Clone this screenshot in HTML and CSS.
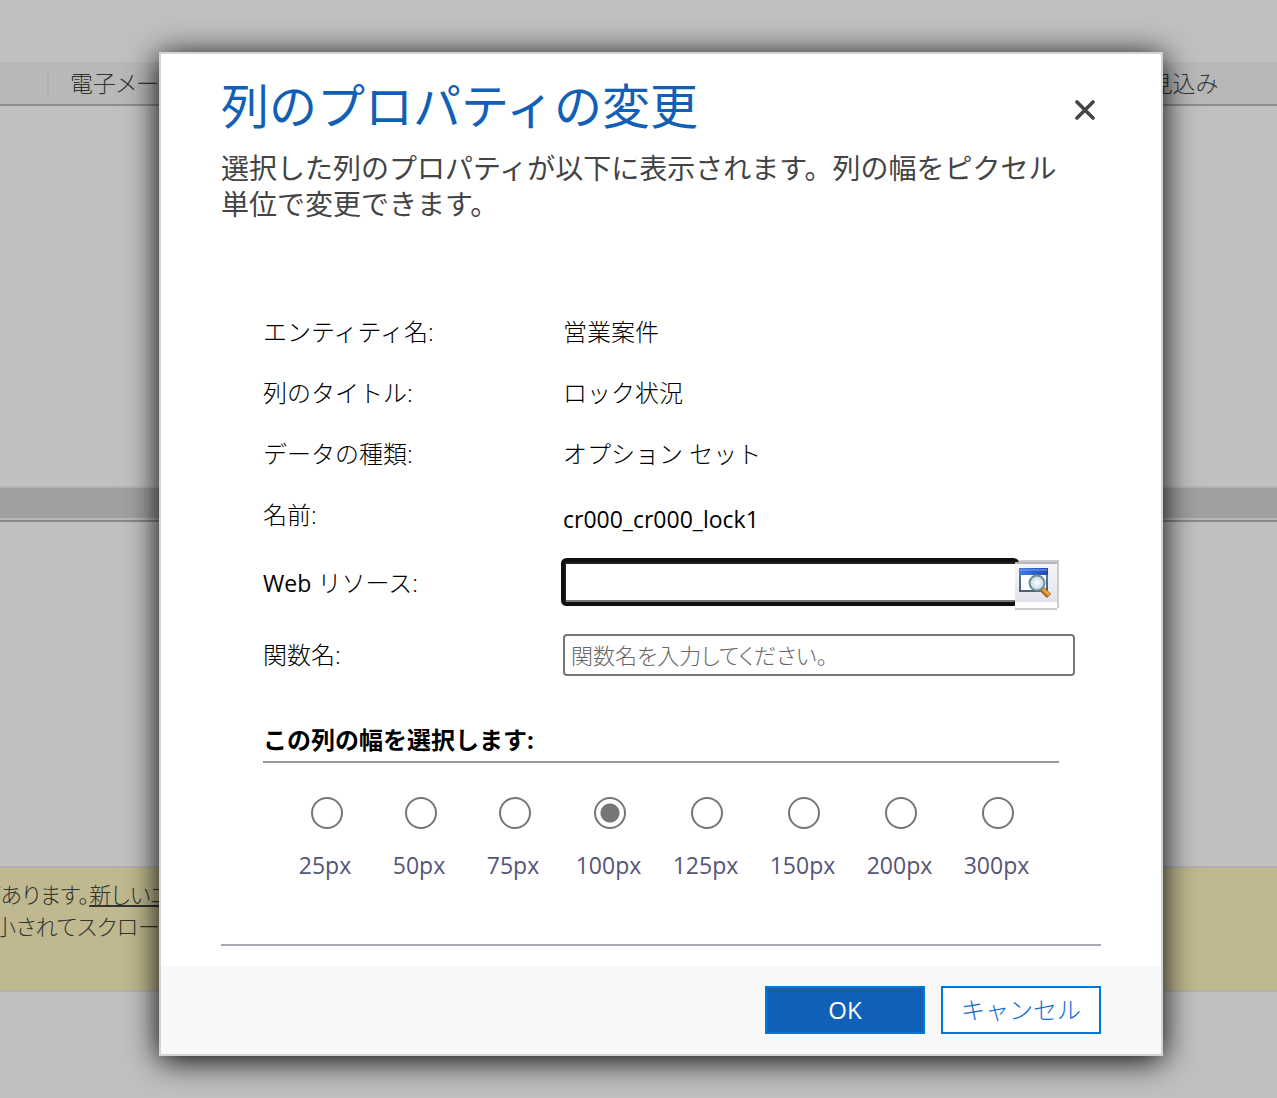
FILE: index.html
```html
<!DOCTYPE html>
<html lang="ja">
<head>
<meta charset="utf-8">
<meta name="viewport" content="width=device-width, initial-scale=1">
<title>列のプロパティの変更</title>
<link rel="stylesheet" href="styles.css">
</head>
<body>
<div class="stage">
  <div class="backdrop">
    <div class="view-header">
      <span class="view-column">電子メール</span>
      <span>見込み</span>
    </div>
    <div class="view-body"></div>
    <div class="view-bar"></div>
    <div class="view-body view-body-lower"></div>
    <div class="notice">
      <p>があります。<a href="#">新しいエ</a></p>
      <p>小されてスクロール</p>
    </div>
  </div>

  <div class="overlay">
    <form class="dialog" role="dialog" aria-labelledby="dialog-title">
      <header class="dialog-header">
        <div class="title-row">
          <h1 id="dialog-title">列のプロパティの変更</h1>
          <button type="button" class="close" aria-label="閉じる">
            <svg width="20" height="20" viewBox="0 0 20 20"><path d="M2 2L18 18M18 2L2 18" stroke="#444" stroke-width="3.6" stroke-linecap="round"/></svg>
          </button>
        </div>
        <p class="description">選択した列のプロパティが以下に表示されます。列の幅をピクセル単位で変更できます。</p>
      </header>

      <div class="dialog-body">
        <dl class="facts">
          <dt>エンティティ名:</dt><dd>営業案件</dd>
          <dt>列のタイトル:</dt><dd>ロック状況</dd>
          <dt>データの種類:</dt><dd>オプション セット</dd>
          <dt>名前:</dt><dd class="latin">cr000_cr000_lock1</dd>
        </dl>
        <div class="field">
          <label for="resource"><span class="latin-word">Web</span> リソース:</label>
          <div class="lookup">
            <input id="resource" type="text">
            <button type="button" aria-label="検索">
              <svg width="36" height="36" viewBox="0 0 36 36">
                <defs>
                  <linearGradient id="bar" x1="0" y1="0" x2="1" y2="0"><stop offset="0" stop-color="#3f7be8"/><stop offset="1" stop-color="#2148b4"/></linearGradient>
                  <linearGradient id="frame" x1="0" y1="0" x2="0" y2="1"><stop offset="0" stop-color="#4c7fd0"/><stop offset="1" stop-color="#4b5f80"/></linearGradient>
                  <radialGradient id="lens"><stop offset="0" stop-color="#fff"/><stop offset="1" stop-color="#b9d3ee"/></radialGradient>
                </defs>
                <rect x="3" y="5" width="27" height="22" fill="#fff" stroke="url(#frame)" stroke-width="2"/>
                <rect x="2" y="4" width="29" height="7" fill="url(#bar)"/>
                <path d="M3 6H30" stroke="#7fa5f4" stroke-width="1"/>
                <path d="M25 25L32 32" stroke="#a5661d" stroke-width="6"/>
                <path d="M26 25L32 31" stroke="#efa13a" stroke-width="3"/>
                <circle cx="20" cy="19" r="7.5" fill="url(#lens)" stroke="#71907f" stroke-width="2"/>
              </svg>
            </button>
          </div>
        </div>
        <div class="field">
          <label for="function">関数名:</label>
          <input id="function" class="text-box" type="text" placeholder="関数名を入力してください。">
        </div>

        <fieldset class="widths">
          <legend>この列の幅を選択します:</legend>
          <div class="choices">
            <label><input type="radio" name="width" value="25"><span>25px</span></label>
            <label><input type="radio" name="width" value="50"><span>50px</span></label>
            <label><input type="radio" name="width" value="75"><span>75px</span></label>
            <label><input type="radio" name="width" value="100" checked><span>100px</span></label>
            <label><input type="radio" name="width" value="125"><span>125px</span></label>
            <label><input type="radio" name="width" value="150"><span>150px</span></label>
            <label><input type="radio" name="width" value="200"><span>200px</span></label>
            <label><input type="radio" name="width" value="300"><span>300px</span></label>
          </div>
        </fieldset>
      </div>

      <footer class="dialog-footer">
        <button type="button" class="button primary">OK</button>
        <button type="button" class="button">キャンセル</button>
      </footer>
    </form>
  </div>
</div>
</body>
</html>
```
FILE: styles.css
```css
* {
  box-sizing: border-box;
}

body {
  margin: 0;
  font-family: "Open Sans", "Noto Sans CJK JP", sans-serif;
  font-size: 24px;
  font-weight: 300;
  line-height: 36px;
  color: #000;
}

h1, p, dl, dd, fieldset {
  margin: 0;
}

button, input {
  font: inherit;
}

.stage {
  display: grid;
  min-height: 100vh;
  background: #c0c0c0;
  overflow: hidden;
}

.backdrop, .overlay {
  grid-area: 1 / 1;
  min-width: 0;
}

/* Dimmed view behind the dialog */
.backdrop {
  color: #333;
  font-size: 23px;
  font-feature-settings: "palt";
}

.view-header {
  display: flex;
  justify-content: space-between;
  align-items: center;
  height: 44px;
  margin-top: 62px;
  padding: 0 59px 0 47px;
  background: #b8b8b8;
  border-bottom: 2px solid #8c8c8c;
}

.view-column {
  padding-left: 21px;
  border-left: 2px solid #b0b0b0;
  line-height: 28px;
}

.view-body {
  height: 380px;
}

.view-bar {
  height: 34px;
  background: #a0a0a0;
  border-top: 2px solid #b4b4b4;
  border-bottom: 2px solid #b8b8b8;
}

.view-body-lower {
  height: 346px;
  border-top: 2px solid #888;
}

.notice {
  height: 126px;
  padding: 10px 0;
  background: #c0b88e;
  border: solid #b0b0b0;
  border-width: 2px 0;
  font-size: 22px;
  line-height: 32px;
}

.notice p {
  margin-left: -21px;
}

.notice p + p {
  margin-left: -6px;
}

.notice a {
  color: inherit;
}

/* Dialog */
.overlay {
  z-index: 1;
  padding: 52px 114px 42px 159px;
}

.dialog {
  background: #fff;
  border: 2px solid #d4d4d4;
  box-shadow: 0 4px 30px #000;
}

.dialog-header {
  padding: 16px 60px 0;
}

.title-row {
  display: flex;
  justify-content: space-between;
  align-items: center;
}

h1 {
  font-size: 48px;
  line-height: 72px;
  font-weight: 400;
  color: #1160b7;
}

.close {
  display: flex;
  margin: 8px 6px 0 0;
  padding: 0;
  border: 0;
  background: none;
}

.description {
  margin-top: 8px;
  padding-right: 28px;
  font-size: 28px;
  font-weight: 400;
  color: #444;
}

.dialog-body {
  margin: 0 60px;
  padding: 79px 42px 61px;
  border-bottom: 2px solid #a4a9b3;
}

.facts {
  display: grid;
  grid-template-columns: 300px 1fr;
  margin-bottom: 2px;
  line-height: 61px;
}

.field {
  display: grid;
  grid-template-columns: 300px 1fr;
  align-items: center;
  height: 72px;
}

.lookup {
  display: flex;
  height: 48px;
  margin-top: 2px;
  border: solid #ccc;
  border-width: 2px 2px 0 0;
}

.lookup input {
  flex: 1;
  min-width: 0;
  height: 40px;
  margin-left: 2px;
  padding: 0 8px;
  border: solid #222;
  border-width: 2px 0 2px 1px;
  border-bottom-color: #767676;
  border-radius: 2px;
  outline: 0;
  box-shadow: 0 0 0 4px #101010;
}

.lookup button {
  z-index: 1;
  width: 42px;
  height: 48px;
  padding: 0 0 6px 2px;
  border: 0;
  border-bottom: 2px solid #ccc;
  background: linear-gradient(#b4b4bc 2px, #f6f6fa 2px, #e2e2ec 40px, #fff 40px);
}

.lookup svg {
  display: block;
}

.text-box {
  width: calc(100% + 16px);
  height: 42px;
  padding: 0 6px;
  border: 2px solid #767676;
  border-radius: 4px;
  font-size: 22px;
  font-feature-settings: "palt";
}

.text-box::placeholder {
  color: #666;
}

.widths {
  margin-top: 31px;
  padding: 0;
  border: 0;
}

.widths legend {
  width: 100%;
  padding: 0 0 3px;
  border-bottom: 2px solid #999;
  font-weight: 700;
}

.choices {
  display: grid;
  grid-template-columns: repeat(3, 94fr) repeat(5, 97fr);
  padding: 34px 14px 0 15px;
  color: #555577;
}

.choices label {
  display: flex;
  flex-direction: column;
  align-items: center;
  gap: 18px;
}

.choices input {
  appearance: none;
  width: 32px;
  height: 32px;
  margin: 0 0 0 3px;
  border: 2px solid #767676;
  border-radius: 50%;
}

.choices input:checked {
  background: radial-gradient(circle, #767676 9px, #fff 10px);
}

.latin, .latin-word, .choices {
  font-size: 23px;
  font-weight: 400;
}

.latin {
  padding-top: 10px;
  line-height: 51px;
}

.dialog-footer {
  display: flex;
  justify-content: flex-end;
  gap: 16px;
  margin-top: 20px;
  padding: 20px 60px;
  background: #f8f8f8;
}

.button {
  width: 160px;
  height: 48px;
  padding: 0;
  border: 2px solid #0078d7;
  background: #fff;
  color: #0f6cd0;
}

.primary {
  background: #1160b7;
  color: #fff;
  font-weight: 400;
}
```
